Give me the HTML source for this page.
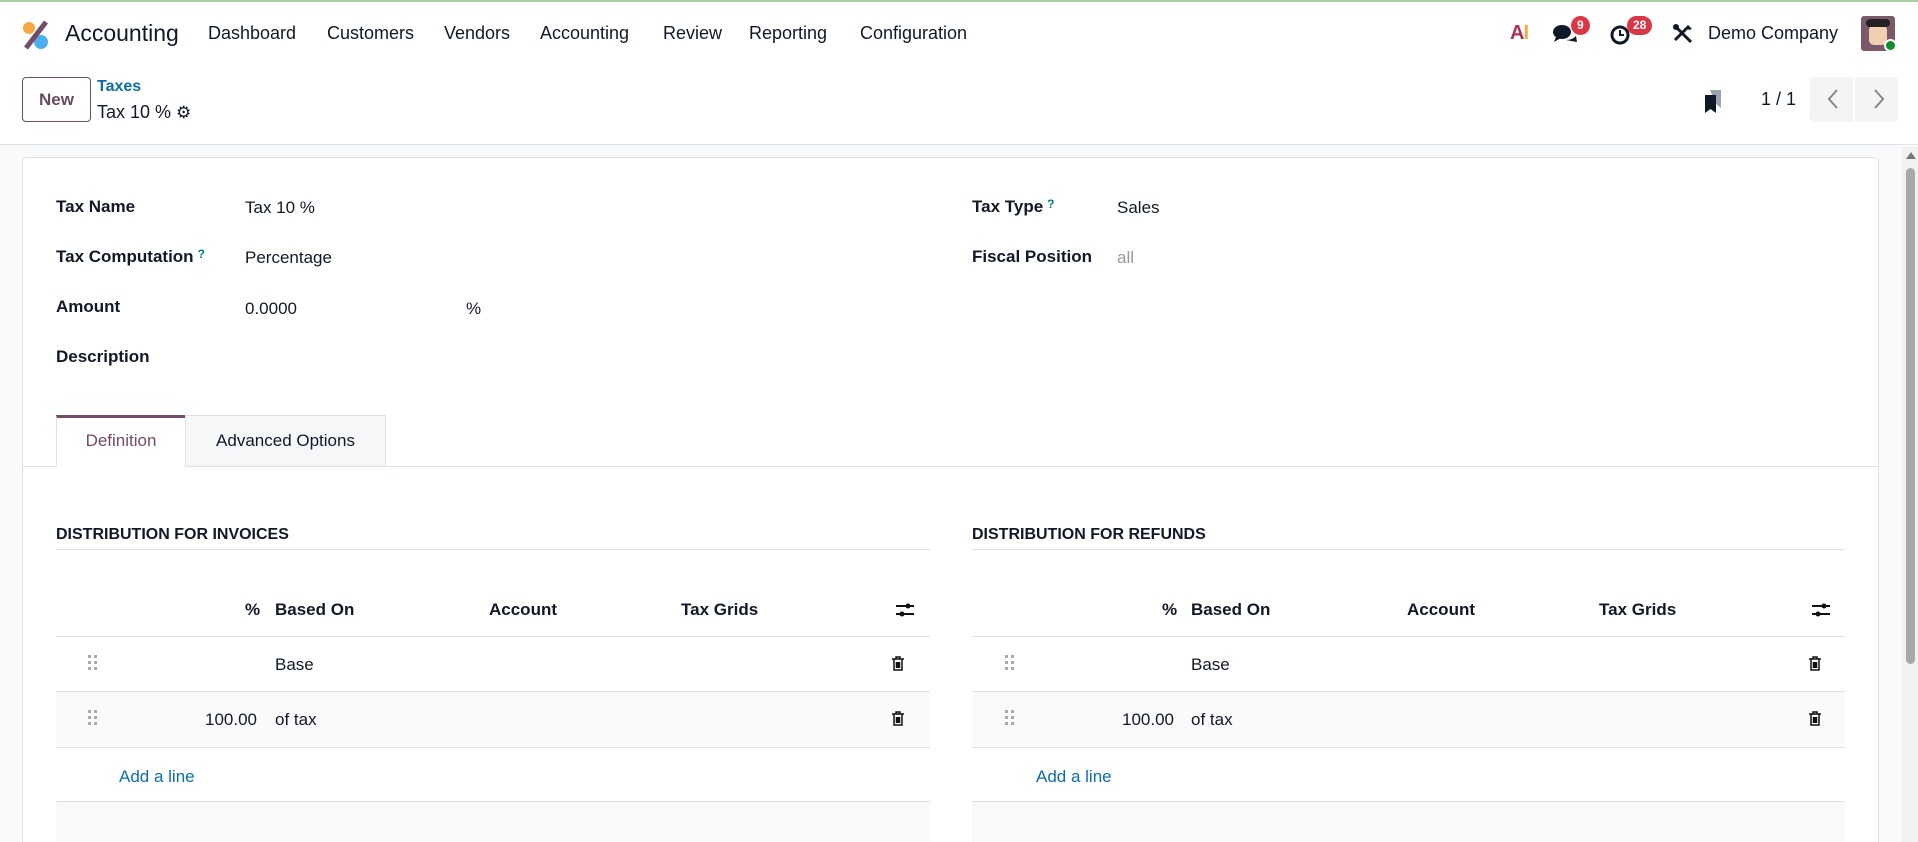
<!DOCTYPE html>
<html style="width:1918px;height:842px;overflow:hidden"><head><meta charset="utf-8"><style>
*{box-sizing:border-box;margin:0;padding:0}
body{width:1918px;height:842px;overflow:hidden;background:#f9fafb;font-family:"Liberation Sans",sans-serif;font-size:17px;color:#111827;position:relative}
.a{position:absolute;white-space:nowrap}
.nav{top:0;left:0;width:1918px;height:57px;background:#fff;border-top:2px solid #a6d2a0}
.cp{top:57px;left:0;width:1918px;height:88px;background:#fff;border-bottom:1px solid #dee2e6}
.sheet{top:157px;left:22px;width:1857px;height:700px;background:#fff;border:1px solid #dee2e6;border-radius:4px}
.lbl{font-weight:bold;color:#111827}
.q{color:#017e84;font-size:12px;vertical-align:top;margin-left:4px}
.th{font-weight:bold}
.line{height:1px;background:#dee2e6}
.badge{background:#dc3545;color:#fff;font-size:12px;font-weight:bold;border-radius:10px;padding:2px 6px;line-height:15px}
</style></head><body>
<div class="a nav"></div>
<svg class="a" style="left:21px;top:20px" width="30" height="30" viewBox="0 0 30 30"><circle cx="8" cy="8" r="6" fill="#f7a840"/><circle cx="20" cy="22" r="7" fill="#4cb0f0"/><path d="M5 28 L25 2" stroke="#714b67" stroke-width="5"/></svg>
<div class="a" style="left:65px;top:20px;font-size:23px">Accounting</div>
<div class="a" style="left:208px;top:23px;font-size:18px">Dashboard</div>
<div class="a" style="left:327px;top:23px;font-size:18px">Customers</div>
<div class="a" style="left:444px;top:23px;font-size:18px">Vendors</div>
<div class="a" style="left:540px;top:23px;font-size:18px">Accounting</div>
<div class="a" style="left:663px;top:23px;font-size:18px">Review</div>
<div class="a" style="left:749px;top:23px;font-size:18px">Reporting</div>
<div class="a" style="left:860px;top:23px;font-size:18px">Configuration</div>
<div class="a" style="left:1510px;top:22px;font-size:20px;font-weight:bold;color:#a35;letter-spacing:-1px">A<span style="color:#f7a840">I</span></div>
<svg class="a" style="left:1552px;top:22px" width="26" height="24" viewBox="0 0 26 24"><ellipse cx="10" cy="10" rx="9" ry="7" fill="#111827"/><path d="M4 15 L2 20 L9 16Z" fill="#111827"/><path d="M14 18 Q20 18 24 14 L25 20 L19 19Z" fill="#111827"/></svg>
<div class="a badge" style="left:1571px;top:16px">9</div>
<svg class="a" style="left:1609px;top:22px" width="24" height="24" viewBox="0 0 24 24"><circle cx="11" cy="13" r="8" fill="none" stroke="#111827" stroke-width="3"/><path d="M11 8v5h4" stroke="#111827" stroke-width="2" fill="none"/></svg>
<div class="a badge" style="left:1627px;top:16px">28</div>
<svg class="a" style="left:1672px;top:23px" width="22" height="22" viewBox="0 0 22 22"><path d="M5 5 L19 19" stroke="#111827" stroke-width="3"/><path d="M17 3 L3 17" stroke="#111827" stroke-width="3"/><circle cx="4" cy="4" r="3" fill="#111827"/><path d="M16 2l4 4-3 1-2-2z" fill="#111827"/></svg>
<div class="a" style="left:1708px;top:23px;font-size:18px">Demo Company</div>
<div class="a" style="left:1861px;top:16px;width:34px;height:35px;background:#7a5a6a;border-radius:3px"><div style="position:absolute;left:8px;top:9px;width:18px;height:20px;background:#f0d0b0;border-radius:5px"></div><div style="position:absolute;left:5px;top:3px;width:24px;height:8px;background:#222;border-radius:4px"></div></div>
<div class="a" style="left:1884px;top:39px;width:13px;height:13px;background:#0a8f2a;border-radius:50%;border:2px solid #fff"></div>
<div class="a cp"></div>
<div class="a" style="left:22px;top:77px;width:69px;height:45px;border:1px solid #714b67;border-radius:4px;text-align:center;line-height:43px;font-weight:bold;color:#6b4a5e">New</div>
<div class="a" style="left:97px;top:78px;font-weight:bold;font-size:16px;color:#0b6ea8">Taxes</div>
<div class="a" style="left:97px;top:102px;font-size:18px">Tax 10 % <span style="font-size:17px">⚙</span></div>
<svg class="a" style="left:1703px;top:88px" width="22" height="26" viewBox="0 0 22 26"><path d="M7 2h11v18l-5-4z" fill="#9ca3af"/><path d="M2 7h11v18l-5.5-4L2 25z" fill="#111827"/></svg>
<div class="a" style="left:1761px;top:89px;font-size:18px">1 / 1</div>
<div class="a" style="left:1810px;top:77px;width:88px;height:45px;background:#f3f4f6;border-radius:4px"></div>
<div class="a" style="left:1853px;top:77px;width:2px;height:45px;background:#fff"></div>
<svg class="a" style="left:1822px;top:86px" width="70" height="26" viewBox="0 0 70 26"><path d="M15 4 L7 13 L15 22 M53 4 L61 13 L53 22" stroke="#888" stroke-width="2" fill="none"/></svg>
<div class="a" style="left:1902px;top:147px;width:16px;height:695px;background:#f1f1f1"></div>
<div class="a" style="left:1906px;top:168px;width:9px;height:496px;background:#a8a8a8;border-radius:5px"></div>
<div class="a" style="left:1906px;top:152px;width:0;height:0;border-left:5px solid transparent;border-right:5px solid transparent;border-bottom:7px solid #777"></div>
<div class="a sheet"></div>
<div class="a lbl" style="left:56px;top:197px">Tax Name</div>
<div class="a" style="left:245px;top:198px">Tax 10 %</div>
<div class="a lbl" style="left:56px;top:247px">Tax Computation<span class="q">?</span></div>
<div class="a" style="left:245px;top:248px">Percentage</div>
<div class="a lbl" style="left:56px;top:297px">Amount</div>
<div class="a" style="left:245px;top:299px">0.0000</div>
<div class="a" style="left:466px;top:299px">%</div>
<div class="a lbl" style="left:56px;top:347px">Description</div>
<div class="a lbl" style="left:972px;top:197px">Tax Type<span class="q">?</span></div>
<div class="a" style="left:1117px;top:198px">Sales</div>
<div class="a lbl" style="left:972px;top:247px">Fiscal Position</div>
<div class="a" style="left:1117px;top:248px;color:#999">all</div>
<div class="a line" style="left:23px;top:466px;width:1855px"></div>
<div class="a" style="left:56px;top:415px;width:130px;height:52px;background:#fff;border:1px solid #dee2e6;border-top:3px solid #714b67;border-bottom:none;text-align:center;line-height:46px;color:#714b67">Definition</div>
<div class="a" style="left:185px;top:415px;width:201px;height:51px;background:#f6f7f9;border:1px solid #dee2e6;border-bottom:none;text-align:center;line-height:50px">Advanced Options</div>
<div class="a" style="left:56px;top:526px;font-weight:bold;font-size:16px">DISTRIBUTION FOR INVOICES</div>
<div class="a line" style="left:56px;top:549px;width:874px"></div>
<div class="a" style="left:972px;top:526px;font-weight:bold;font-size:16px">DISTRIBUTION FOR REFUNDS</div>
<div class="a line" style="left:972px;top:549px;width:873px"></div>
<div class="a" style="left:56px;top:691px;width:874px;height:56px;background:#fafafa"></div>
<div class="a" style="left:56px;top:801px;width:874px;height:45px;background:#f9f9f9"></div>
<div class="a" style="left:972px;top:691px;width:873px;height:56px;background:#fafafa"></div>
<div class="a" style="left:972px;top:801px;width:873px;height:45px;background:#f9f9f9"></div>
<div class="a line" style="left:56px;top:636px;width:874px"></div><div class="a line" style="left:56px;top:691px;width:874px"></div><div class="a line" style="left:56px;top:747px;width:874px"></div><div class="a line" style="left:56px;top:801px;width:874px"></div>
<div class="a line" style="left:972px;top:636px;width:873px"></div><div class="a line" style="left:972px;top:691px;width:873px"></div><div class="a line" style="left:972px;top:747px;width:873px"></div><div class="a line" style="left:972px;top:801px;width:873px"></div>
<div class="a th" style="left:245px;top:600px">%</div>
<div class="a th" style="left:275px;top:600px">Based On</div>
<div class="a th" style="left:489px;top:600px">Account</div>
<div class="a th" style="left:681px;top:600px">Tax Grids</div>
<div class="a" style="left:275px;top:655px">Base</div>
<div class="a" style="left:205px;top:710px">100.00</div>
<div class="a" style="left:275px;top:710px">of tax</div>
<div class="a" style="left:119px;top:767px;color:#0b6ea8">Add a line</div>
<div class="a th" style="left:1162px;top:600px">%</div>
<div class="a th" style="left:1191px;top:600px">Based On</div>
<div class="a th" style="left:1407px;top:600px">Account</div>
<div class="a th" style="left:1599px;top:600px">Tax Grids</div>
<div class="a" style="left:1191px;top:655px">Base</div>
<div class="a" style="left:1122px;top:710px">100.00</div>
<div class="a" style="left:1191px;top:710px">of tax</div>
<div class="a" style="left:1036px;top:767px;color:#0b6ea8">Add a line</div>
<svg width="0" height="0" style="position:absolute"><defs>
<g id="drag"><rect x="0" y="0" width="3" height="3" fill="#aaa"/><rect x="6" y="0" width="3" height="3" fill="#aaa"/><rect x="0" y="6" width="3" height="3" fill="#aaa"/><rect x="6" y="6" width="3" height="3" fill="#aaa"/><rect x="0" y="12" width="3" height="3" fill="#aaa"/><rect x="6" y="12" width="3" height="3" fill="#aaa"/></g>
<g id="trash"><path d="M1 3h12M5 3V1h4v2M3 3v11h8V3M5.5 6v6M7 6v6M8.5 6v6" stroke="#111" stroke-width="1.5" fill="none"/></g>
<g id="set"><path d="M1 5h18M1 13h18" stroke="#111" stroke-width="2"/><circle cx="13" cy="5" r="2.5" fill="#111"/><circle cx="7" cy="13" r="2.5" fill="#111"/></g>
</defs></svg>
<svg class="a" style="left:88px;top:655px" width="10" height="16"><use href="#drag"/></svg>
<svg class="a" style="left:88px;top:710px" width="10" height="16"><use href="#drag"/></svg>
<svg class="a" style="left:1005px;top:655px" width="10" height="16"><use href="#drag"/></svg>
<svg class="a" style="left:1005px;top:710px" width="10" height="16"><use href="#drag"/></svg>
<svg class="a" style="left:891px;top:656px" width="14" height="16"><use href="#trash"/></svg>
<svg class="a" style="left:891px;top:711px" width="14" height="16"><use href="#trash"/></svg>
<svg class="a" style="left:1808px;top:656px" width="14" height="16"><use href="#trash"/></svg>
<svg class="a" style="left:1808px;top:711px" width="14" height="16"><use href="#trash"/></svg>
<svg class="a" style="left:895px;top:601px" width="20" height="18"><use href="#set"/></svg>
<svg class="a" style="left:1811px;top:601px" width="20" height="18"><use href="#set"/></svg>
</body></html>
